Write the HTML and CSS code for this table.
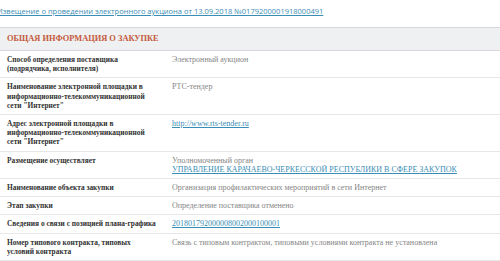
FILE: index.html
```html
<!DOCTYPE html>
<html lang="ru">
<head>
<meta charset="utf-8">
<link rel="stylesheet" href="styles.css">
</head>
<body>
<div class="top"><a class="notice" href="#">Извещение о проведении электронного аукциона от 13.09.2018 №0179200001918000491</a></div>
<section class="block">
  <h2 class="block-title">ОБЩАЯ ИНФОРМАЦИЯ О ЗАКУПКЕ</h2>
  <div class="rows">
    <div class="row"><div class="label">Способ определения поставщика<br>(подрядчика, исполнителя)</div><div class="value">Электронный аукцион</div></div>
    <div class="row"><div class="label">Наименование электронной площадки в<br>информационно-телекоммуникационной<br>сети "Интернет"</div><div class="value">РТС-тендер</div></div>
    <div class="row"><div class="label">Адрес электронной площадки в<br>информационно-телекоммуникационной<br>сети "Интернет"</div><div class="value"><a href="#">http://www.rts-tender.ru</a></div></div>
    <div class="row"><div class="label">Размещение осуществляет</div><div class="value">Уполномоченный орган<br><a href="#">УПРАВЛЕНИЕ КАРАЧАЕВО-ЧЕРКЕССКОЙ РЕСПУБЛИКИ В СФЕРЕ ЗАКУПОК</a></div></div>
    <div class="row"><div class="label">Наименование объекта закупки</div><div class="value">Организация профилактических мероприятий в сети Интернет</div></div>
    <div class="row"><div class="label">Этап закупки</div><div class="value">Определение поставщика отменено</div></div>
    <div class="row"><div class="label">Сведения о связи с позицией плана-графика</div><div class="value"><a href="#">201801792000008002000100001</a></div></div>
    <div class="row"><div class="label">Номер типового контракта, типовых<br>условий контракта</div><div class="value">Связь с типовым контрактом, типовыми условиями контракта не установлена</div></div>
  </div>
</section>
</body>
</html>
```
FILE: styles.css
```css
html, body {
  margin: 0;
  padding: 0;
  background: #ffffff;
}
body {
  font-family: "Liberation Serif", serif;
  width: 500px;
  overflow: hidden;
}
.top {
  height: 27px;
  margin-left: -3px;
}
.notice {
  display: inline-block;
  margin-top: 6px;
  font-family: "Open Sans", "DejaVu Sans", sans-serif;
  font-size: 7.5px;
  line-height: 10px;
  color: #3a8db5;
  text-decoration: underline;
  white-space: nowrap;
}
.block-title {
  margin: 0;
  height: 22px;
  line-height: 22px;
  padding-left: 7px;
  background: #eef0f2;
  border-top: 1px solid #d6d8db;
  border-bottom: 1px solid #d6d8db;
  font-size: 8.4px;
  font-weight: bold;
  color: #c4593a;
}
.row {
  display: grid;
  grid-template-columns: 165px 1fr;
  border-bottom: 1px solid #e6e7e9;
  padding: 4px 0 4px 7px;
  font-size: 8px;
  line-height: 9.2px;
}
.label {
  font-size: 7.4px;
  font-weight: bold;
  color: #333333;
  white-space: nowrap;
}
.value {
  color: #858585;
}
.value a {
  color: #3a8db5;
  text-decoration: underline;
}
```
